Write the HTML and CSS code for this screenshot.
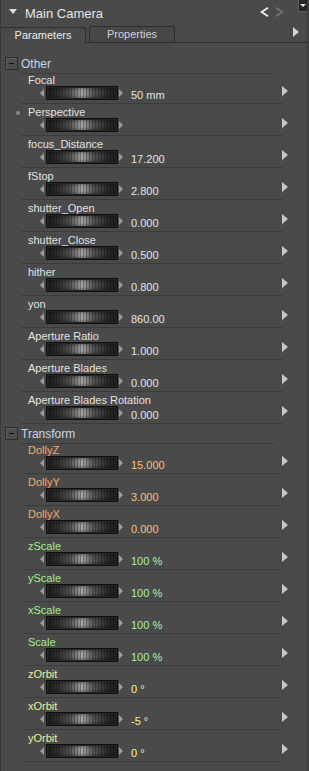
FILE: index.html
```html
<!DOCTYPE html>
<html lang="en">
<head>
    <meta charset="UTF-8">
    <title>Main Camera</title>
    <link rel="stylesheet" href="styles.css">
</head>
<body>
<div class="panel">
    <div class="titlebar">
        <svg class="collapse" width="8" height="5" viewBox="0 0 8 5"><polygon points="0,0 8,0 4,5" fill="#dedede"/></svg>
        <span class="title">Main Camera</span>
        <svg class="nav" width="9" height="10" viewBox="0 0 9 10"><polyline points="8,0.8 1.5,5 8,9.2" fill="none" stroke="#f2f2f2" stroke-width="1.8"/></svg>
        <svg class="nav nav-next" width="9" height="10" viewBox="0 0 9 10"><polyline points="1,0.8 7.5,5 1,9.2" fill="none" stroke="#747474" stroke-width="1.8"/></svg>
        <span class="menu-box"><svg width="6" height="3" viewBox="0 0 6 3"><polygon points="0,0 6,0 3,3" fill="#e8e8e8"/></svg></span>
    </div>

    <div class="tabs">
        <div class="tab active">Parameters</div>
        <div class="tab">Properties</div>
        <svg class="tab-more" width="6" height="10" viewBox="0 0 6 10"><polygon points="0,0 6,5 0,10" fill="#d4d4d4"/></svg>
    </div>

    <div class="content">
        <div class="section">
            <div class="sec-head">
                <span class="toggle"><i></i></span>
                <span class="sec-title">Other</span>
            </div>
            <div class="rows">
                <div class="param">
                    <div class="label">Focal</div>
                    <div class="control"><i class="nub left"></i><span class="wheel"></span><i class="nub right"></i><span class="value">50 mm</span><svg class="more" width="6" height="10" viewBox="0 0 6 10"><polygon points="0,0 6,5 0,10"/></svg></div>
                </div>
                <div class="param">
                    <div class="label"><span class="dot"></span>Perspective</div>
                    <div class="control"><i class="nub left"></i><span class="wheel"></span><i class="nub right"></i><span class="value"></span><svg class="more" width="6" height="10" viewBox="0 0 6 10"><polygon points="0,0 6,5 0,10"/></svg></div>
                </div>
                <div class="param">
                    <div class="label">focus_Distance</div>
                    <div class="control"><i class="nub left"></i><span class="wheel"></span><i class="nub right"></i><span class="value">17.200</span><svg class="more" width="6" height="10" viewBox="0 0 6 10"><polygon points="0,0 6,5 0,10"/></svg></div>
                </div>
                <div class="param">
                    <div class="label">fStop</div>
                    <div class="control"><i class="nub left"></i><span class="wheel"></span><i class="nub right"></i><span class="value">2.800</span><svg class="more" width="6" height="10" viewBox="0 0 6 10"><polygon points="0,0 6,5 0,10"/></svg></div>
                </div>
                <div class="param">
                    <div class="label">shutter_Open</div>
                    <div class="control"><i class="nub left"></i><span class="wheel"></span><i class="nub right"></i><span class="value">0.000</span><svg class="more" width="6" height="10" viewBox="0 0 6 10"><polygon points="0,0 6,5 0,10"/></svg></div>
                </div>
                <div class="param">
                    <div class="label">shutter_Close</div>
                    <div class="control"><i class="nub left"></i><span class="wheel"></span><i class="nub right"></i><span class="value">0.500</span><svg class="more" width="6" height="10" viewBox="0 0 6 10"><polygon points="0,0 6,5 0,10"/></svg></div>
                </div>
                <div class="param">
                    <div class="label">hither</div>
                    <div class="control"><i class="nub left"></i><span class="wheel"></span><i class="nub right"></i><span class="value">0.800</span><svg class="more" width="6" height="10" viewBox="0 0 6 10"><polygon points="0,0 6,5 0,10"/></svg></div>
                </div>
                <div class="param">
                    <div class="label">yon</div>
                    <div class="control"><i class="nub left"></i><span class="wheel"></span><i class="nub right"></i><span class="value">860.00</span><svg class="more" width="6" height="10" viewBox="0 0 6 10"><polygon points="0,0 6,5 0,10"/></svg></div>
                </div>
                <div class="param">
                    <div class="label">Aperture Ratio</div>
                    <div class="control"><i class="nub left"></i><span class="wheel"></span><i class="nub right"></i><span class="value">1.000</span><svg class="more" width="6" height="10" viewBox="0 0 6 10"><polygon points="0,0 6,5 0,10"/></svg></div>
                </div>
                <div class="param">
                    <div class="label">Aperture Blades</div>
                    <div class="control"><i class="nub left"></i><span class="wheel"></span><i class="nub right"></i><span class="value">0.000</span><svg class="more" width="6" height="10" viewBox="0 0 6 10"><polygon points="0,0 6,5 0,10"/></svg></div>
                </div>
                <div class="param">
                    <div class="label">Aperture Blades Rotation</div>
                    <div class="control"><i class="nub left"></i><span class="wheel"></span><i class="nub right"></i><span class="value">0.000</span><svg class="more" width="6" height="10" viewBox="0 0 6 10"><polygon points="0,0 6,5 0,10"/></svg></div>
                </div>
            </div>
        </div>

        <div class="section">
            <div class="sec-head">
                <span class="toggle"><i></i></span>
                <span class="sec-title">Transform</span>
            </div>
            <div class="rows">
                <div class="param dolly">
                    <div class="label">DollyZ</div>
                    <div class="control"><i class="nub left"></i><span class="wheel"></span><i class="nub right"></i><span class="value">15.000</span><svg class="more" width="6" height="10" viewBox="0 0 6 10"><polygon points="0,0 6,5 0,10"/></svg></div>
                </div>
                <div class="param dolly">
                    <div class="label">DollyY</div>
                    <div class="control"><i class="nub left"></i><span class="wheel"></span><i class="nub right"></i><span class="value">3.000</span><svg class="more" width="6" height="10" viewBox="0 0 6 10"><polygon points="0,0 6,5 0,10"/></svg></div>
                </div>
                <div class="param dolly">
                    <div class="label">DollyX</div>
                    <div class="control"><i class="nub left"></i><span class="wheel"></span><i class="nub right"></i><span class="value">0.000</span><svg class="more" width="6" height="10" viewBox="0 0 6 10"><polygon points="0,0 6,5 0,10"/></svg></div>
                </div>
                <div class="param scale">
                    <div class="label">zScale</div>
                    <div class="control"><i class="nub left"></i><span class="wheel"></span><i class="nub right"></i><span class="value">100 %</span><svg class="more" width="6" height="10" viewBox="0 0 6 10"><polygon points="0,0 6,5 0,10"/></svg></div>
                </div>
                <div class="param scale">
                    <div class="label">yScale</div>
                    <div class="control"><i class="nub left"></i><span class="wheel"></span><i class="nub right"></i><span class="value">100 %</span><svg class="more" width="6" height="10" viewBox="0 0 6 10"><polygon points="0,0 6,5 0,10"/></svg></div>
                </div>
                <div class="param scale">
                    <div class="label">xScale</div>
                    <div class="control"><i class="nub left"></i><span class="wheel"></span><i class="nub right"></i><span class="value">100 %</span><svg class="more" width="6" height="10" viewBox="0 0 6 10"><polygon points="0,0 6,5 0,10"/></svg></div>
                </div>
                <div class="param scale">
                    <div class="label">Scale</div>
                    <div class="control"><i class="nub left"></i><span class="wheel"></span><i class="nub right"></i><span class="value">100 %</span><svg class="more" width="6" height="10" viewBox="0 0 6 10"><polygon points="0,0 6,5 0,10"/></svg></div>
                </div>
                <div class="param orbit">
                    <div class="label">zOrbit</div>
                    <div class="control"><i class="nub left"></i><span class="wheel"></span><i class="nub right"></i><span class="value">0 °</span><svg class="more" width="6" height="10" viewBox="0 0 6 10"><polygon points="0,0 6,5 0,10"/></svg></div>
                </div>
                <div class="param orbit">
                    <div class="label">xOrbit</div>
                    <div class="control"><i class="nub left"></i><span class="wheel"></span><i class="nub right"></i><span class="value">-5 °</span><svg class="more" width="6" height="10" viewBox="0 0 6 10"><polygon points="0,0 6,5 0,10"/></svg></div>
                </div>
                <div class="param orbit">
                    <div class="label">yOrbit</div>
                    <div class="control"><i class="nub left"></i><span class="wheel"></span><i class="nub right"></i><span class="value">0 °</span><svg class="more" width="6" height="10" viewBox="0 0 6 10"><polygon points="0,0 6,5 0,10"/></svg></div>
                </div>
            </div>
        </div>
    </div>
</div>
</body>
</html>
```

FILE: styles.css
```css
body {
    margin: 0;
    background-color: #4a4a4a;
    font-family: "Liberation Sans", Arial, sans-serif;
    color: #e2e2e2;
}
.panel {
    width: 309px;
    min-height: 771px;
    box-sizing: border-box;
    background-color: #4a4a4a;
    border-left: 1px solid #3c3c3c;
    border-right: 2px solid #3e3e3e;
    overflow: hidden;
}

/* title bar */
.titlebar {
    display: flex;
    align-items: flex-start;
    height: 26px;
    box-sizing: border-box;
    padding: 6px 0 0 8px;
}
.collapse {
    margin-top: 3px;
    margin-right: 8px;
}
.title {
    font-size: 13px;
    line-height: 16px;
    color: #e6e6e6;
    flex: 1;
}
.nav {
    margin-top: 1px;
    margin-right: 6px;
}
.nav-next {
    margin-right: 14px;
}
.menu-box {
    display: flex;
    justify-content: center;
    align-items: center;
    width: 10px;
    height: 12px;
    box-sizing: border-box;
    margin-top: -6px;
    margin-right: -1px;
    background-color: #262626;
    border: 1px solid #5a5a5a;
    border-top: none;
}

/* tabs */
.tabs {
    display: flex;
    align-items: flex-end;
    height: 16px;
    border-bottom: 1px solid #2e2e2e;
}
.tab {
    font-size: 11px;
    line-height: 14px;
    height: 15px;
    box-sizing: border-box;
    text-align: center;
    border: 1px solid #2e2e2e;
    border-bottom: none;
    border-radius: 3px 3px 0 0;
    color: #d2d2d2;
    background-color: #474747;
}
.tab.active {
    width: 85px;
    height: 16px;
    margin-bottom: -1px;
    border-left: none;
    border-radius: 0 3px 0 0;
    border-bottom: 1px solid #4a4a4a;
    color: #ececec;
    background-color: #4a4a4a;
}
.tab:not(.active) {
    width: 86px;
    height: 16px;
    margin-left: 3px;
    border-bottom: none;
}
.tab-more {
    align-self: flex-start;
    margin: 1px 8px 0 auto;
}

/* sections */
.content {
    margin-top: 11px;
}
.sec-head {
    display: flex;
    padding-left: 4px;
}
.toggle {
    display: flex;
    justify-content: center;
    align-items: center;
    width: 13px;
    height: 13px;
    box-sizing: border-box;
    margin-top: 3px;
    margin-right: 2px;
    border: 1px solid #2c2c2c;
    box-shadow: inset 1px 1px 0 #5e5e5e;
    background-color: #4d4d4d;
}
.toggle i {
    display: block;
    width: 5px;
    height: 1px;
    background-color: #111;
}
.sec-title {
    flex: 1;
    margin-right: 32px;
    padding: 3px 0 2px 1px;
    font-size: 12px;
    line-height: 14px;
    color: #c6d6e8;
    border-bottom: 1px solid #3c3c3c;
}
.rows {
    margin: 0 24px 0 20px;
}
.param {
    height: 32px;
    box-sizing: border-box;
    padding-top: 2px;
    border-bottom: 1px solid #3c3c3c;
}
.param:first-child {
    height: 30px;
    padding-top: 0;
}
.label {
    display: flex;
    align-items: center;
    padding-left: 7px;
    font-size: 11px;
    line-height: 12px;
    height: 12px;
    color: #e2e2e2;
}
.dot {
    width: 4px;
    height: 4px;
    margin: 1px 8px 0 -12px;
    border-radius: 50%;
    background-color: #8a8a8a;
}

/* dial control */
.control {
    display: flex;
    align-items: flex-start;
    height: 14px;
}
.nub {
    width: 0;
    height: 0;
    margin-top: 3px;
    border-top: 4px solid transparent;
    border-bottom: 4px solid transparent;
}
.nub.left {
    margin-left: 19px;
    margin-right: 2px;
    border-right: 4px solid #9c9c9c;
}
.nub.right {
    margin-left: 1px;
    border-left: 4px solid #9c9c9c;
}
.wheel {
    width: 72px;
    height: 14px;
    box-sizing: border-box;
    border: 1px solid #0f0f0f;
    box-shadow: inset 0 0 0 1px #262626;
    background:
        linear-gradient(180deg, rgba(0,0,0,.35), rgba(0,0,0,0) 35%, rgba(0,0,0,0) 65%, rgba(0,0,0,.35)),
        repeating-linear-gradient(90deg, rgba(0,0,0,.28) 0 1px, rgba(0,0,0,0) 1px 3px),
        linear-gradient(90deg, #1c1c1c, #2c2c2c 14%, #555 34%, #a6a6a6 50%, #555 66%, #2c2c2c 86%, #1c1c1c);
}
.value {
    flex: 1;
    margin: 2px 0 0 8px;
    font-size: 11px;
    line-height: 14px;
    color: #e4e4e4;
}
.more {
    fill: #c8c8c8;
    margin-right: -5px;
}

.dolly .label { color: #f2ad66; }
.dolly .value { color: #f2c27a; }
.scale .label { color: #a4ee8c; }
.scale .value { color: #a6f2a6; }
.orbit .label { color: #eeee9c; }
.orbit .value { color: #f4f49a; }
```
